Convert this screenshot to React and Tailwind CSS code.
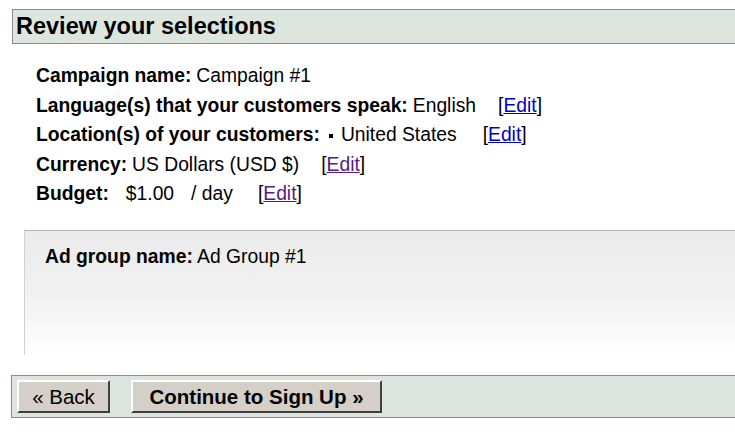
import React from 'react';

const rows = [
    { label: 'Campaign name:', value: 'Campaign #1' },
    { label: 'Language(s) that your customers speak:', value: 'English', edit: 'blue', gap: 'ml-[22px]' },
    { label: 'Location(s) of your customers:', value: 'United States', bullet: true, edit: 'blue', gap: 'ml-[26px]' },
    { label: 'Currency:', value: 'US Dollars (USD $)', edit: 'purple', gap: 'ml-[22px]' },
    { label: 'Budget:', value: '$1.00', extra: '/ day', edit: 'purple', gap: 'ml-[25px]', lead: 'ml-[17px]' },
];

const EditLink = ({ visited }) => (
    <span>
        [<a href="#" className={visited ? 'underline text-[#551a8b]' : 'underline text-[#0000cc]'}>Edit</a>]
    </span>
);

const App = () => {
    return (
        <div className="w-[735px] h-[432px] overflow-hidden bg-white text-black font-['Liberation_Sans',Arial,sans-serif]">
            <div className="mt-[9px] ml-[12px] h-[35px] flex items-center pl-[3px] bg-[#dde6de] border-y border-l border-[#8c8c8c]">
                <h1 className="text-[23.5px] font-bold">Review your selections</h1>
            </div>

            <div className="pl-[36px] pt-[18px] text-[19.3px]">
                {rows.map((r) => (
                    <div key={r.label} className="h-[29.5px] flex items-center whitespace-pre">
                        <span className="font-bold">{r.label}</span>
                        {r.bullet && <span className="ml-[9px] mr-[8px] w-[4px] h-[4px] bg-black" />}
                        <span className={r.bullet ? '' : r.lead || 'ml-[5px]'}>{r.value}</span>
                        {r.extra && <span className="ml-[17px]">{r.extra}</span>}
                        {r.edit && (
                            <span className={r.gap}>
                                <EditLink visited={r.edit === 'purple'} />
                            </span>
                        )}
                    </div>
                ))}
            </div>

            <div className="mt-[20px] ml-[24px] h-[125px] pl-[20px] pt-[12px] border-t border-l border-t-[#b4b4b4] border-l-[#d0d0d0] bg-gradient-to-b from-[#ebebeb] via-[#f1f1f1] to-white text-[19.3px]">
                <span className="font-bold">Ad group name:</span> Ad Group #1
            </div>

            <div className="mt-[20px] ml-[11px] h-[43px] flex items-center gap-[21px] pl-[5px] bg-[#dde6de] border-y border-l border-[#8c8c8c]">
                <button className="w-[93px] h-[33px] text-[20.5px] bg-[#d4d0c8] border-t-2 border-l-2 border-t-white border-l-white border-b-2 border-r-2 border-b-[#404040] border-r-[#404040]">
                    « Back
                </button>
                <button className="w-[251px] h-[33px] text-[20.5px] font-bold bg-[#d4d0c8] border-t-2 border-l-2 border-t-white border-l-white border-b-2 border-r-2 border-b-[#404040] border-r-[#404040]">
                    Continue to Sign Up »
                </button>
            </div>
        </div>
    );
};

export default App;
